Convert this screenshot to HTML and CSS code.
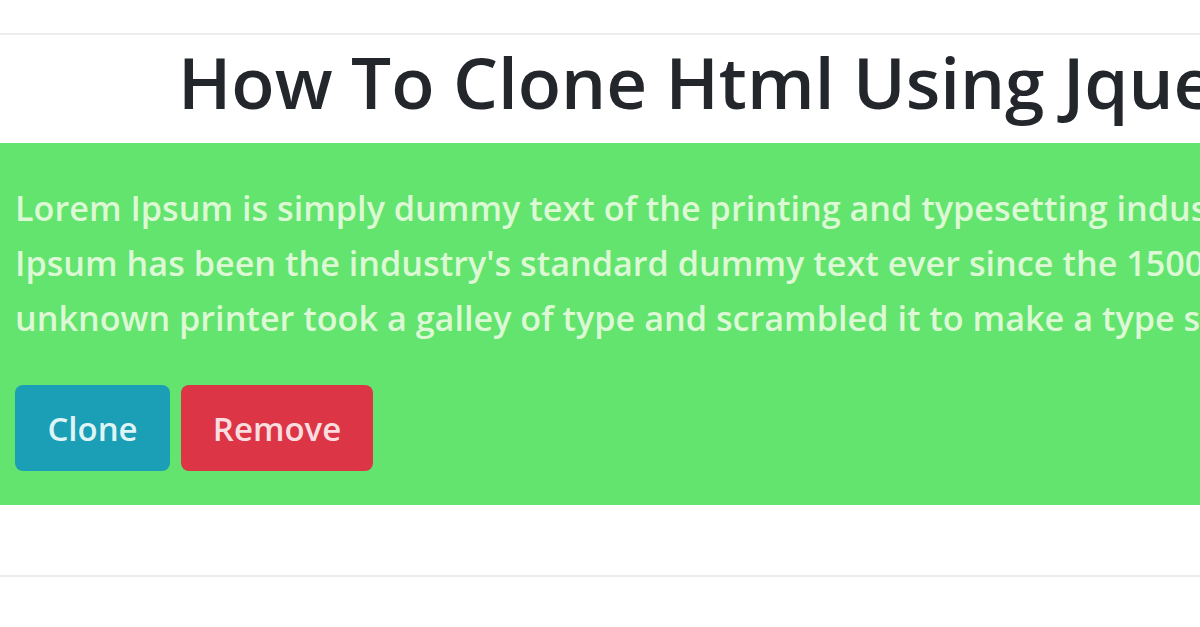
FILE: index.html
```html
<!DOCTYPE html>
<html>
<head>
<meta charset="utf-8">
<link rel="stylesheet" href="styles.css">
</head>
<body>
<div class="page">
  <div class="rule"></div>
  <h2 class="title">How To Clone Html Using Jquery</h2>
  <div class="box">
    <p class="text">
      <span class="line">Lorem Ipsum is simply dummy text of the printing and typesetting industry. Lorem</span>
      <span class="line">Ipsum has been the industry's standard dummy text ever since the 1500s, when an</span>
      <span class="line">unknown printer took a galley of type and scrambled it to make a type specimen book.</span>
    </p>
    <div class="actions">
      <button class="btn btn-clone">Clone</button>
      <button class="btn btn-remove">Remove</button>
    </div>
  </div>
  <div class="rule rule-bottom"></div>
</div>
</body>
</html>
```

FILE: styles.css
```css
html, body {
  margin: 0;
  padding: 0;
  background: #ffffff;
  overflow: hidden;
}
.page {
  width: 1200px;
  height: 627px;
  overflow: hidden;
  font-family: "Open Sans", "Noto Sans", sans-serif;
}
.rule {
  margin-top: 33px;
  height: 2px;
  background: #ececec;
}
.title {
  margin: 0;
  padding: 7px 0 0 178px;
  height: 101px;
  font-size: 71px;
  line-height: 80px;
  font-weight: 600;
  color: #23262b;
  white-space: nowrap;
}
.box {
  background: #62e46e;
  height: 362px;
  padding: 0 0 0 15px;
  box-sizing: border-box;
  white-space: nowrap;
}
.text {
  margin: 0;
  padding-top: 37px;
  font-size: 34.2px;
  line-height: 55px;
  font-weight: 600;
  color: #dcf8d4;
}
.line {
  display: block;
}
.actions {
  display: flex;
  gap: 11px;
  margin-top: 40px;
}
.btn {
  font-family: inherit;
  font-size: 33px;
  font-weight: 600;
  height: 86px;
  padding: 0;
  border: none;
  border-radius: 8px;
  color: #dff4f4;
}
.btn-clone {
  background: #1a9fb6;
  width: 155px;
}
.btn-remove {
  background: #dc3545;
  color: #fbdde0;
  width: 192px;
}
.rule-bottom {
  margin-top: 70px;
}
```
